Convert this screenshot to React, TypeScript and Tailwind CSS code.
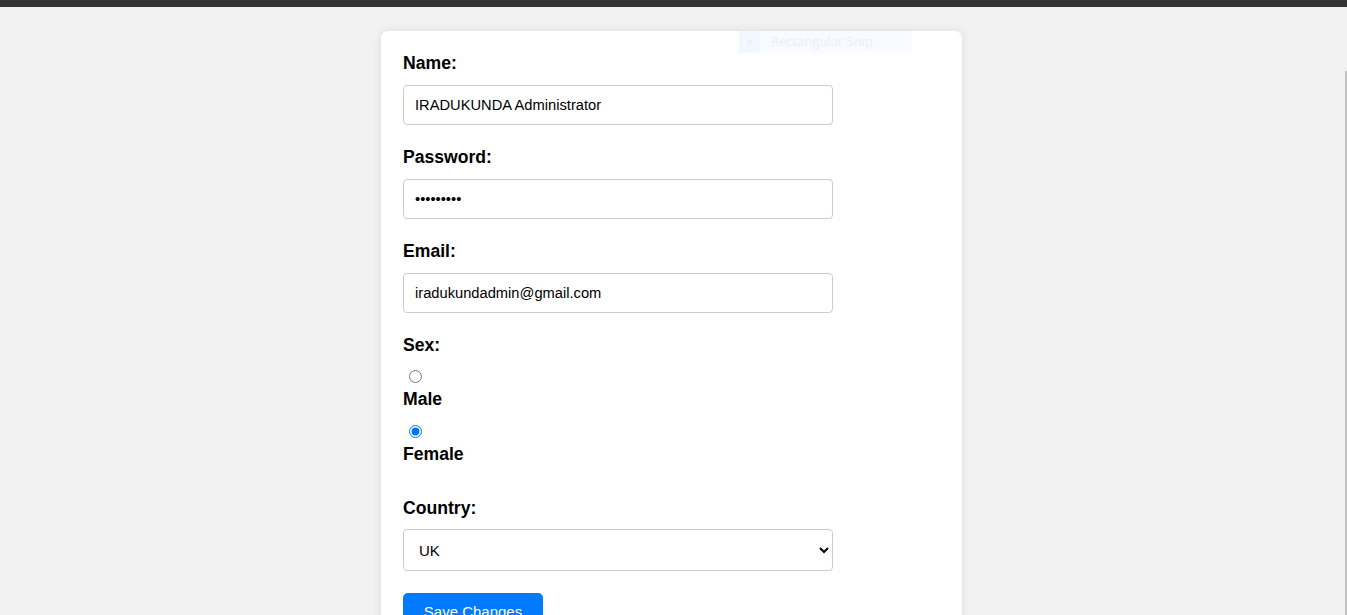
import { useState } from 'react';

const font = { fontFamily: '"Liberation Sans", Arial, sans-serif' };

export default function App() {
  const [sex, setSex] = useState('female');
  const [country, setCountry] = useState('UK');

  return (
    <div className="relative h-[615px] overflow-hidden bg-[#f2f2f2] text-black" style={font}>
      {/* cut-off top nav */}
      <div className="h-[7px] bg-[#333333]" />

      <div className="flex justify-center pr-[4px] pt-[24px]">
        <form className="w-[581px] rounded-[7px] bg-white pl-[22px] pr-5 pt-[22px] pb-5 shadow-[0_0_10px_rgba(0,0,0,0.1)]">
          <label className="block text-[17.6px] font-bold leading-[20px] mb-[12px]">Name:</label>
          <input
            type="text"
            defaultValue="IRADUKUNDA Administrator"
            className="block w-[430px] h-[40px] mb-[22px] rounded-[4px] border border-[#cccccc] px-[11px] text-[14.7px] outline-none"
          />

          <label className="block text-[17.6px] font-bold leading-[20px] mb-[12px]">Password:</label>
          <input
            type="password"
            defaultValue="123456789"
            className="block w-[430px] h-[40px] mb-[22px] rounded-[4px] border border-[#cccccc] px-[11px] text-[14.7px] outline-none"
          />

          <label className="block text-[17.6px] font-bold leading-[20px] mb-[12px]">Email:</label>
          <input
            type="email"
            defaultValue="iradukundadmin@gmail.com"
            className="block w-[430px] h-[40px] mb-[22px] rounded-[4px] border border-[#cccccc] px-[11px] text-[14.7px] outline-none"
          />

          <label className="block text-[17.6px] font-bold leading-[20px]">Sex:</label>
          <input
            type="radio"
            name="sex"
            checked={sex === 'male'}
            onChange={() => setSex('male')}
            className="block h-[13px] w-[13px] ml-[6px] mt-[15px]"
          />
          <label className="block text-[17.6px] font-bold leading-[20px] mt-[6px]">Male</label>
          <input
            type="radio"
            name="sex"
            checked={sex === 'female'}
            onChange={() => setSex('female')}
            className="block h-[13px] w-[13px] ml-[6px] mt-[16px]"
          />
          <label className="block text-[17.6px] font-bold leading-[20px] mt-[6px]">Female</label>

          <label className="block text-[17.6px] font-bold leading-[20px] mt-[34px] mb-[11px]">Country:</label>
          <select
            value={country}
            onChange={(e) => setCountry(e.target.value)}
            className="block w-[430px] h-[42px] rounded-[4px] border border-[#cccccc] bg-white pl-[11px] pr-[7px] text-[15px] outline-none"
          >
            <option value="Rwanda">Rwanda</option>
            <option value="USA">USA</option>
            <option value="UK">UK</option>
            <option value="Kenya">Kenya</option>
          </select>

          <button
            type="button"
            className="mt-[22px] block w-[140px] rounded-[5px] bg-[#007bff] py-[10px] text-center text-[15px] leading-[18px] text-white"
          >
            Save Changes
          </button>
        </form>
      </div>

      {/* faded snipping tool hint */}
      <div
        className="absolute left-[739px] top-[31px] flex h-[22px] w-[173px] items-center bg-[#f8fbff]"
        style={{ fontFamily: '"Open Sans", "Noto Sans", sans-serif' }}
      >
        <div className="flex h-full w-[21px] items-center justify-center bg-[#f2f8ff]">
          <div className="h-[5px] w-[5px] rounded-full bg-[#eef0f2]" />
        </div>
        <span className="ml-[11px] text-[13px] text-[#eceef1]">Rectangular Snip</span>
      </div>

      {/* thin scrollbar thumb */}
      <div className="absolute right-0 top-[71px] h-[544px] w-[2px] bg-[#c2c2c2]" />
    </div>
  );
}
